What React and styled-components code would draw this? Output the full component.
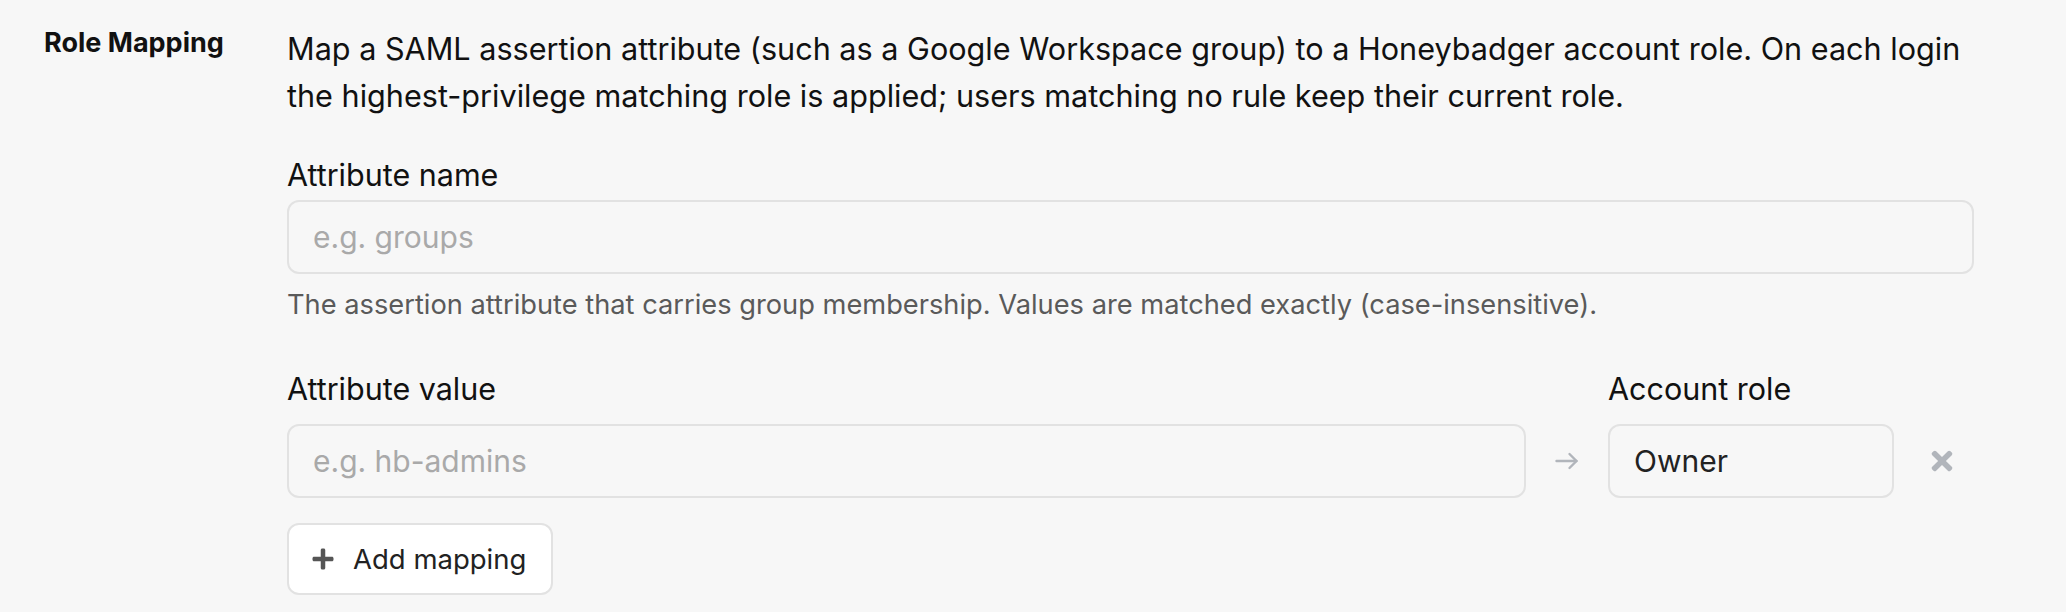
import styled, { createGlobalStyle } from "styled-components"
import { FaPlus, FaTimes } from "react-icons/fa"

const GlobalStyle = createGlobalStyle`
    body {
        margin: 0;
        background: #f7f7f7;
        font-family: Inter, "Noto Sans", sans-serif;
        color: #111;
    }
`

const Section = styled.section`
    display: grid;
    grid-template-columns: 243px 1687px;
    padding: 25px 0 0 44px;
`

const SectionTitle = styled.h3`
    margin: 0;
    font-size: 27px;
    line-height: 36px;
    font-weight: 700;
    color: #111;
`

const Content = styled.div`
    display: flex;
    flex-direction: column;
`

const Description = styled.p`
    margin: 0;
    font-size: 30.6px;
    line-height: 47px;
    color: #111;
`

const FieldLabel = styled.label`
    display: block;
    margin-top: ${props => props.$top || 0}px;
    margin-bottom: ${props => props.$bottom || 0}px;
    font-size: 30.5px;
    line-height: 40px;
    color: #111;
`

const TextInput = styled.input`
    box-sizing: border-box;
    width: 100%;
    height: 74px;
    padding: 0 24px;
    border: 2px solid #e2e2e2;
    border-radius: 12px;
    background: transparent;
    font-family: inherit;
    font-size: 30px;
    color: #222;
    &::placeholder {
        color: #a9a9a9;
    }
    &:focus {
        outline: none;
    }
`

const Help = styled.p`
    margin: 13px 0 0;
    font-size: 27.25px;
    line-height: 36px;
    color: #5a5a5a;
`

const MappingGrid = styled.div`
    display: grid;
    grid-template-columns: 1fr 24px 286px 51px;
    column-gap: 29px;
    row-gap: 15px;
    align-items: center;
    margin-top: 46px;
`

const RoleSelect = styled.div`
    box-sizing: border-box;
    height: 74px;
    display: flex;
    align-items: center;
    padding: 0 24px;
    border: 2px solid #e2e2e2;
    border-radius: 12px;
    font-size: 30px;
    color: #222;
`

const RemoveButton = styled.button`
    display: flex;
    align-items: center;
    padding: 0 0 0 4px;
    border: none;
    background: none;
    color: #b1b5bb;
    cursor: pointer;
    &:focus {
        outline: none;
    }
`

const AddButton = styled.button`
    align-self: flex-start;
    box-sizing: border-box;
    display: flex;
    align-items: center;
    gap: 18px;
    height: 72px;
    margin-top: 25px;
    padding: 0 25px 0 22px;
    border: 2px solid #e2e2e2;
    border-radius: 12px;
    background: #fff;
    font-family: inherit;
    font-size: 27.5px;
    color: #222;
    cursor: pointer;
    svg {
        color: #555;
    }
`

function ArrowIcon() {
    return (
        <svg width="24" height="18" viewBox="0 0 24 18" fill="none" stroke="#b1b5bb" strokeWidth="2.4" strokeLinecap="round" strokeLinejoin="round">
            <path d="M1.5 9h20" />
            <path d="M14.5 2l7 7-7 7" />
        </svg>
    )
}

export default function App() {
    return (
        <>
            <GlobalStyle />
            <Section>
                <SectionTitle>Role Mapping</SectionTitle>
                <Content>
                    <Description>
                        Map a SAML assertion attribute (such as a Google Workspace group) to a Honeybadger account role. On each login
                        the highest-privilege matching role is applied; users matching no rule keep their current role.
                    </Description>
                    <FieldLabel $top={36} $bottom={5}>Attribute name</FieldLabel>
                    <TextInput placeholder="e.g. groups" />
                    <Help>The assertion attribute that carries group membership. Values are matched exactly (case-insensitive).</Help>
                    <MappingGrid>
                        <FieldLabel>Attribute value</FieldLabel>
                        <span />
                        <FieldLabel>Account role</FieldLabel>
                        <span />
                        <TextInput placeholder="e.g. hb-admins" />
                        <ArrowIcon />
                        <RoleSelect>Owner</RoleSelect>
                        <RemoveButton aria-label="Remove mapping">
                            <FaTimes size={30} />
                        </RemoveButton>
                    </MappingGrid>
                    <AddButton>
                        <FaPlus size={24} />
                        Add mapping
                    </AddButton>
                </Content>
            </Section>
        </>
    )
}
